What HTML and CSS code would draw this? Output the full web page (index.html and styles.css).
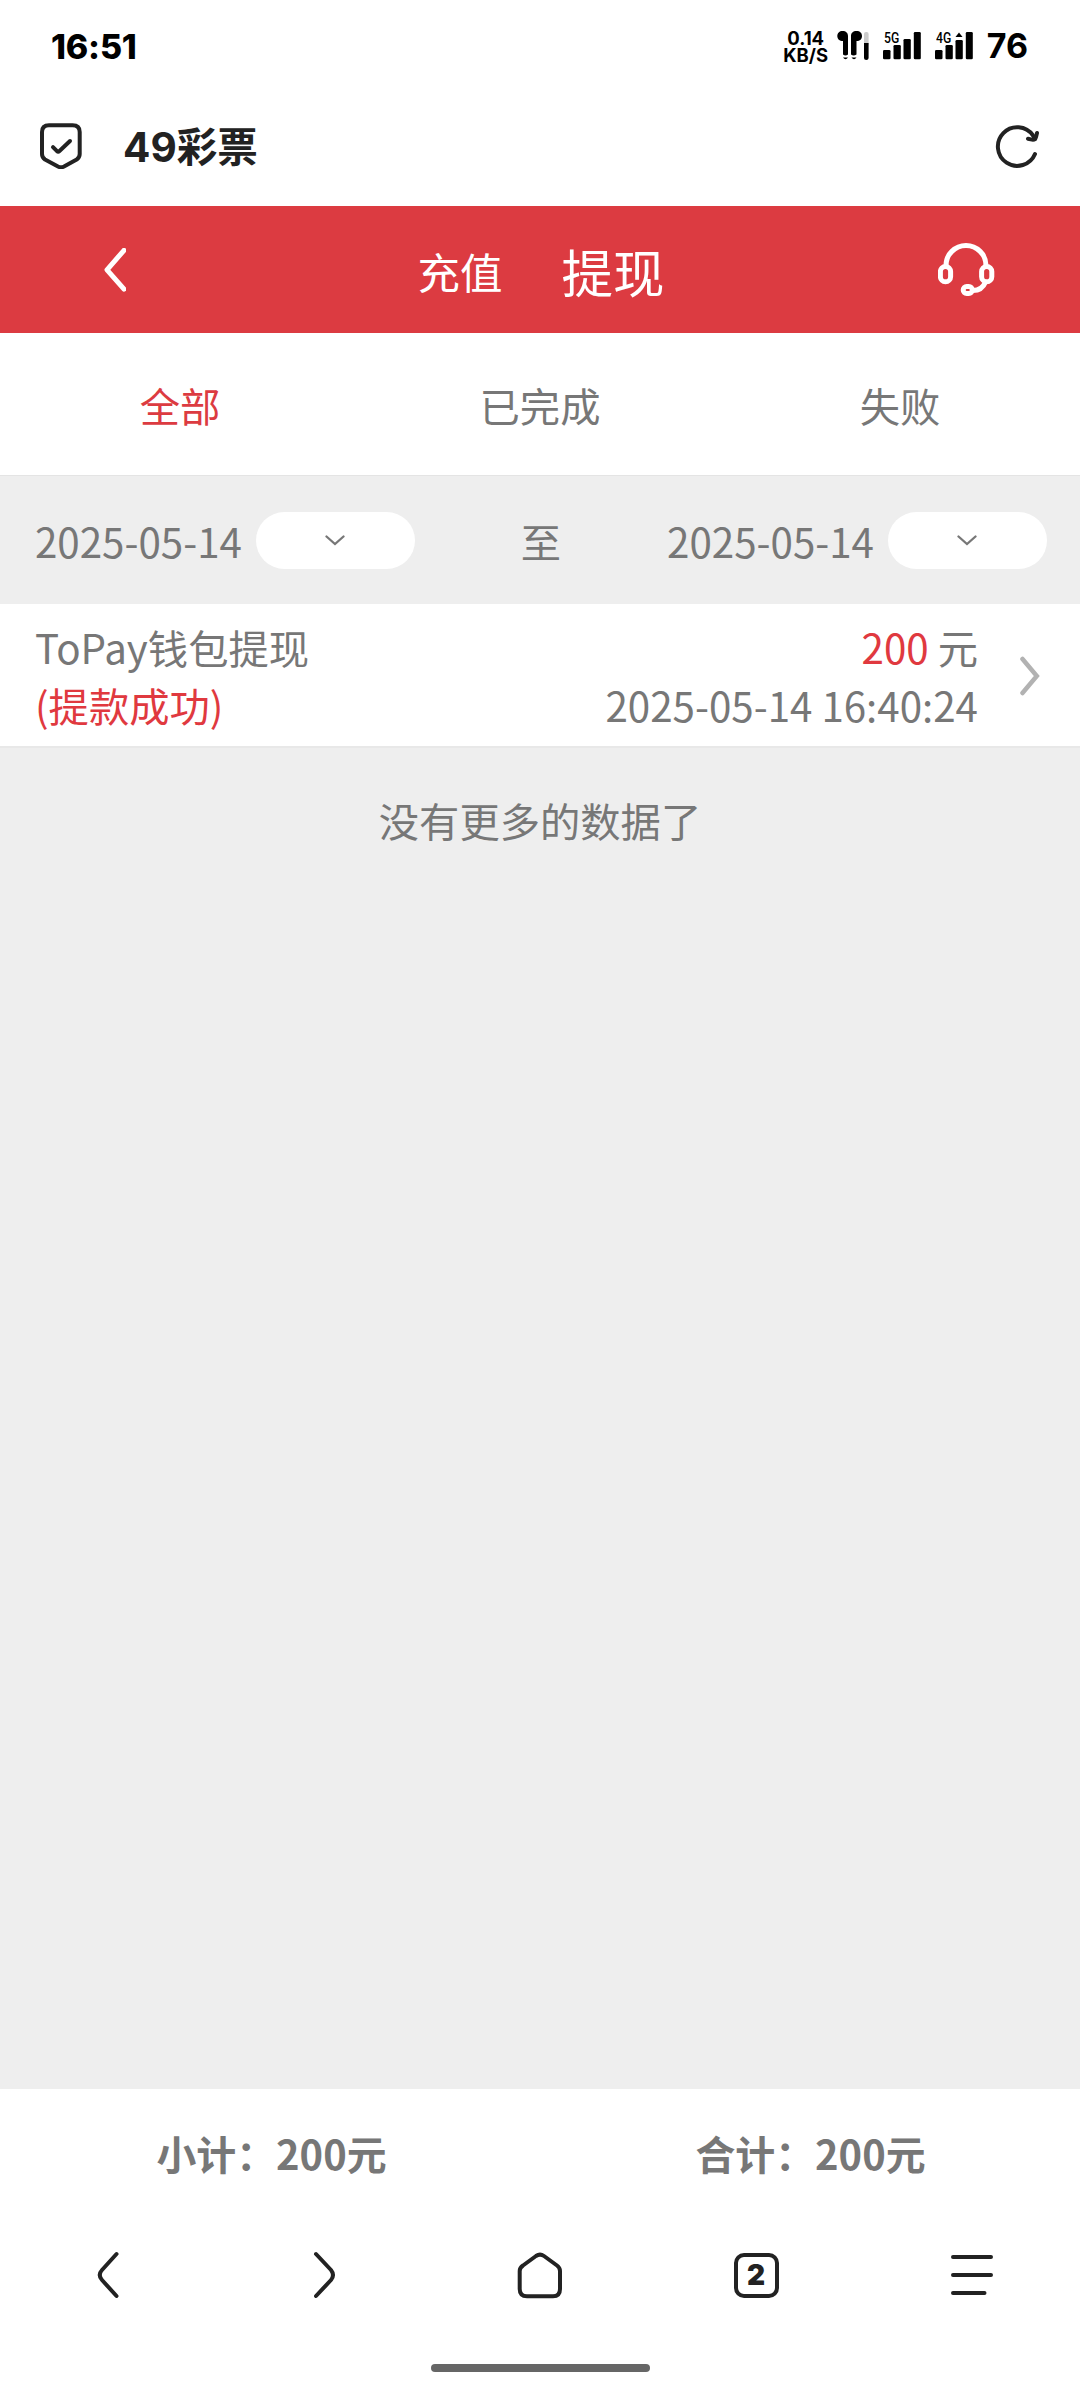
FILE: index.html
```html
<!DOCTYPE html>
<html lang="zh-CN">
<head>
<meta charset="utf-8">
<title>49彩票</title>
<link rel="stylesheet" href="styles.css">
</head>
<body>
<div class="screen">
  <div class="status">
    <span class="time">16:51</span>
    <div class="indicators">
      <div class="speed"><span>0.14</span><span>KB/S</span></div>
      <svg class="buds" width="32" height="30" viewBox="836 31 32 30">
        <path d="M841.500 31C845 31 847 33 847 36V54.500Q844.500 56.500 842 54.500V41C838.500 41 836.300 39 836.300 36C836.300 33 838.500 31 841.500 31ZM855.500 31C852 31 850 33 850 36V54.500Q852.500 56.500 855.500 54.500V41C859 41 861 39 861 36C861 33 859 31 855.500 31Z"/>
        <path d="M842 57.500H847Q844.500 61 842 57.500ZM850.500 57.500H855.500Q853 61 850.500 57.500Z"/>
        <rect x="863" y="32" width="4.600" height="14" rx="2" fill="#ccc"/>
        <path d="M863 43H867.600V58Q867.600 60 865.300 60Q863 60 863 58Z"/>
      </svg>
      <div class="signal">
        <svg width="38" height="28" viewBox="0 0 38 28"><rect y="18" width="7.500" height="9.300" rx="1.300"/><rect x="10.500" y="13" width="7.300" height="14.300" rx="1.300"/><rect x="20.500" y="7" width="7.300" height="20.300" rx="1.300"/><rect x="30.800" width="7" height="27.300" rx="1.300"/></svg>
        <span class="net">5G</span>
      </div>
      <div class="signal">
        <svg width="38" height="28" viewBox="0 0 38 28"><rect y="18" width="7.500" height="9.300" rx="1.300"/><rect x="10.500" y="13" width="7.300" height="14.300" rx="1.300"/><rect x="20.500" y="8" width="7.300" height="19.300" rx="1.300"/><rect x="30.800" width="7" height="27.300" rx="1.300"/><path d="M24 .5L27.500 5H20.500Z"/></svg>
        <span class="net">4G</span>
      </div>
      <span class="battery">76</span>
    </div>
  </div>

  <div class="address">
    <svg width="42" height="46" viewBox="40 123 42 46"><path d="M49 125.300H72.600Q79.700 125.300 79.700 132V154Q79.700 157.500 76.700 159.500L64 166.500Q61 168 58 166.500L45 159.500Q42 157.500 42 154V132Q42 125.300 49 125.300Z"/><path d="M53 147.200L57 151.200Q58.200 152.200 59.500 151L70 141"/></svg>
    <h1>49彩票</h1>
    <svg width="44" height="44" viewBox="995 123 44 44"><path d="M1035 153A19.300 19.300 0 1 1 1033 134.500L1035 138"/><path d="M1037 132L1036 136Q1035.300 139 1032 138.600L1028 137.700"/></svg>
  </div>

  <header class="topbar">
    <svg width="22" height="44" viewBox="104 248 22 44"><path d="M124 250.300L107 269.800L124 289.200"/></svg>
    <div class="modes"><span>充值</span><strong>提现</strong></div>
    <svg width="57" height="54" viewBox="938 243 57 54"><path d="M946 265.500A20 20 0 0 1 986 265.500"/><rect x="940.400" y="266.400" width="10.200" height="15.400" rx="5.100"/><rect x="981.600" y="266.400" width="10.200" height="15.400" rx="5.100"/><rect x="963.200" y="286.600" width="9.100" height="7" rx="3.500"/><path d="M985.500 282Q982 290.500 973 290.500"/></svg>
  </header>

  <nav class="tabs"><span class="active">全部</span><span>已完成</span><span>失败</span></nav>

  <section class="filter">
    <div class="date"><span>2025-05-14</span><button><svg width="20" height="11" viewBox="0 0 20 11"><path d="M1.500 1.500L10 9L18.500 1.500"/></svg></button></div>
    <span>至</span>
    <div class="date"><span>2025-05-14</span><button><svg width="20" height="11" viewBox="0 0 20 11"><path d="M1.500 1.500L10 9L18.500 1.500"/></svg></button></div>
  </section>

  <article class="record">
    <div class="kind"><span>ToPay钱包提现</span><span class="red">(提款成功)</span></div>
    <div class="amount"><span><span class="red">200</span> 元</span><span>2025-05-14 16:40:24</span></div>
    <svg width="20" height="40" viewBox="0 0 20 40"><path d="M2.500 3L16.800 20L2.500 37"/></svg>
  </article>

  <main class="rest">没有更多的数据了</main>

  <footer class="totals"><span>小计：200元</span><span>合计：200元</span></footer>

  <nav class="browser">
    <svg width="46" height="48" viewBox="85 2251 46 48"><path d="M116.500 2254L102 2270Q97.500 2275 102 2280L116.500 2296"/></svg>
    <svg width="46" height="48" viewBox="301 2251 46 48"><path d="M316 2254L331 2270Q335 2275 331 2280L316 2296"/></svg>
    <svg width="46" height="48" viewBox="517 2251 46 48"><path d="M536 2256L523 2265.500Q519.700 2267.800 519.700 2271V2289Q519.700 2296.300 527 2296.300H553Q560 2296.300 560 2289V2271Q560 2267.800 557 2265.500L544 2256Q540 2253.200 536 2256Z"/></svg>
    <span class="windows">2</span>
    <svg width="46" height="48" viewBox="949 2251 46 48"><path d="M953 2257H991M953 2275H991M953 2293H984.500"/></svg>
  </nav>
  <div class="handle"></div>
</div>
</body>
</html>
```
FILE: styles.css
```css
* { box-sizing: border-box; }
body { margin: 0; background: #fff; }
svg { display: block; flex: none; }
.screen {
  width: 1080px;
  height: 2400px;
  display: flex;
  flex-direction: column;
  font-family: "Noto Sans CJK SC", sans-serif;
  font-size: 40.300px;
  color: #777;
  white-space: nowrap;
}
.red { color: #e0393f; }

.status {
  height: 92px;
  padding: 0 52px 0 51px;
  display: flex;
  justify-content: space-between;
  align-items: center;
  font-family: Inter, sans-serif;
  color: #000;
}
.time { font-size: 34px; line-height: 40px; font-weight: 800; padding-top: 1px; letter-spacing: -.2px; }
.indicators { display: flex; align-items: center; }
.speed {
  width: 44px;
  display: flex;
  flex-direction: column;
  align-items: center;
  font-size: 18.500px;
  line-height: 17px;
  font-weight: 700;
  padding-top: 2px;
}
.buds { margin-left: 9px; }
.signal { position: relative; margin-left: 14px; }
.net {
  position: absolute;
  left: 1px;
  top: -1px;
  font-size: 14px;
  line-height: 14px;
  font-weight: 500;
  font-family: Roboto, sans-serif;
  transform: scaleX(.87);
  transform-origin: left;
}
.battery { font-size: 34px; line-height: 40px; margin-left: 14px; font-weight: 700; }

.address {
  height: 114px;
  padding: 0 41px 6px 40px;
  display: flex;
  align-items: center;
}
.address svg { fill: none; stroke: #222; stroke-width: 4; stroke-linecap: round; stroke-linejoin: round; }
.address h1 {
  flex: 1;
  margin: 0 0 0 41px;
  padding-top: 3px;
  font: 700 40.500px/60px Inter, "Noto Sans CJK SC", sans-serif;
  color: #222;
}

.topbar {
  height: 127px;
  padding: 0 85px 0 104px;
  background: #dc3b41;
  color: #fff;
  display: flex;
  align-items: center;
  justify-content: space-between;
}
.topbar svg { fill: none; stroke: #fff; stroke-width: 5; stroke-linecap: round; stroke-linejoin: round; }
.modes { display: flex; align-items: center; gap: 59px; margin: 2px 0 0 18px; font-size: 42.500px; }
.modes strong { font-size: 51.500px; font-weight: 400; line-height: 80px; }

.tabs { height: 142px; display: grid; grid-template-columns: repeat(3, 1fr); align-items: center; text-align: center; line-height: 60px; padding-top: 2px; }
.active { color: #dc3b41; }

.filter {
  height: 129px;
  padding: 0 33px 0 35px;
  background: #eee;
  border-top: 1px solid #e4e4e4;
  display: flex;
  align-items: center;
  justify-content: space-between;
}
.date { display: flex; align-items: center; gap: 14px; }
.date button {
  width: 159px;
  height: 57px;
  padding: 0;
  border: 0;
  border-radius: 29px;
  background: #fff;
  display: flex;
  align-items: center;
  justify-content: center;
}
.date svg { fill: none; stroke: #777; stroke-width: 2.300; stroke-linecap: round; }

.record {
  height: 144px;
  padding: 2px 40px 0 35px;
  background: #fff;
  border-bottom: 2px solid #e8e8e8;
  display: flex;
  align-items: center;
  line-height: 58px;
}
.kind, .amount { display: flex; flex-direction: column; }
.amount { margin-left: auto; margin-right: 42px; align-items: flex-end; }
.record svg { fill: none; stroke: #b2b2b2; stroke-width: 4.500; stroke-linecap: round; }

.rest { flex: 1; background: #eee; padding-top: 42px; text-align: center; line-height: 60px; }

.totals { height: 127px; display: grid; grid-template-columns: 1fr 1fr; align-items: center; text-align: center; font-size: 39.900px; font-weight: 700; padding-left: 2px; }

.browser { height: 118px; display: grid; grid-template-columns: repeat(5, 1fr); align-items: center; justify-items: center; }
.browser svg { fill: none; stroke: #222; stroke-width: 4; stroke-linecap: round; stroke-linejoin: round; }
.windows {
  width: 45px;
  height: 45px;
  border: 4px solid #222;
  border-radius: 10px;
  text-align: center;
  font: 900 28px/36px Inter, sans-serif;
  color: #222;
}
.handle { width: 219px; height: 8px; margin: 30px auto 28px; border-radius: 4px; background: #666; }
```
